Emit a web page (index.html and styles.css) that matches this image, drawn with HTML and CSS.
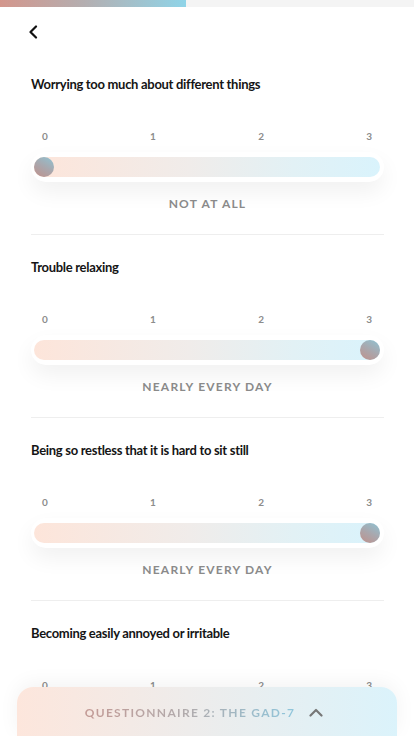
FILE: index.html
```html
<!DOCTYPE html>
<html lang="en">
<head>
<meta charset="utf-8">
<title>GAD-7</title>
<link rel="stylesheet" href="styles.css">
</head>
<body>
<div class="app">
  <div class="progress"><div class="progress-fill"></div></div>
  <header class="header">
    <button class="back" aria-label="Back">
      <svg width="10" height="14" viewBox="0 0 10 14"><path d="M8 1.5 L2.5 7 L8 12.5" fill="none" stroke="#111" stroke-width="2.2" stroke-linecap="round" stroke-linejoin="round"/></svg>
    </button>
  </header>
  <main class="questions">
    <section class="question">
      <h2 class="q-title">Worrying too much about different things</h2>
      <div class="scale"><span>0</span><span>1</span><span>2</span><span>3</span></div>
      <div class="track-wrap"><div class="track start"><div class="thumb"></div></div></div>
      <div class="answer">NOT AT ALL</div>
    </section>
    <section class="question">
      <h2 class="q-title">Trouble relaxing</h2>
      <div class="scale"><span>0</span><span>1</span><span>2</span><span>3</span></div>
      <div class="track-wrap"><div class="track end"><div class="thumb"></div></div></div>
      <div class="answer">NEARLY EVERY DAY</div>
    </section>
    <section class="question">
      <h2 class="q-title">Being so restless that it is hard to sit still</h2>
      <div class="scale"><span>0</span><span>1</span><span>2</span><span>3</span></div>
      <div class="track-wrap"><div class="track end"><div class="thumb"></div></div></div>
      <div class="answer">NEARLY EVERY DAY</div>
    </section>
    <section class="question">
      <h2 class="q-title">Becoming easily annoyed or irritable</h2>
      <div class="scale"><span>0</span><span>1</span><span>2</span><span>3</span></div>
    </section>
  </main>
  <footer class="bottom-bar">
    <span class="bar-title">QUESTIONNAIRE 2: THE GAD-7</span>
    <svg class="chev" width="14" height="9" viewBox="0 0 14 9"><path d="M1.5 7.5 L7 2 L12.5 7.5" fill="none" stroke="#777" stroke-width="2.2" stroke-linecap="round" stroke-linejoin="round"/></svg>
  </footer>
</div>
</body>
</html>
```

FILE: styles.css
```css
* { box-sizing: border-box; }
html, body { margin: 0; padding: 0; background: #fff; }
body { font-family: Lato, "Open Sans", sans-serif; color: #111; }

.app { height: 100vh; overflow: hidden; position: relative; }

.progress { height: 7px; background: #f4f4f4; }
.progress-fill { width: 186px; height: 100%; background: linear-gradient(90deg, #d3968c 0%, #b4aeb0 45%, #8fd4e8 100%); }

.header { height: 53px; padding: 16px 0 0 26px; }
.back { border: 0; background: none; padding: 0; width: 14px; height: 18px; display: flex; align-items: center; justify-content: center; }

.questions { padding: 0 30px 0 31px; }
.question { padding: 24px 0 22px; border-bottom: 1px solid #eeeeee; }
.question:first-child { padding-top: 16px; }
.question:last-child { border-bottom: 0; }

.q-title { margin: 0; font-size: 13px; font-weight: 700; line-height: 16px; color: #151515; letter-spacing: -0.3px; }

.scale { display: flex; justify-content: space-between; padding: 0 12px 0 11px; margin-top: 38px; font-size: 10px; line-height: 12px; color: #8c8c8c; font-weight: 700; }

.track-wrap { margin-top: 10px; height: 30px; padding: 5px 4px 5px 3px; background: #fff; border-radius: 15px; box-shadow: 0 10px 22px rgba(0,0,0,0.06); }
.track { height: 20px; border-radius: 10px; background: linear-gradient(90deg, #fde5da 0%, #f0ecea 45%, #e2f1f5 75%, #d9f3fc 100%); display: flex; }
.track.end { justify-content: flex-end; }
.thumb { width: 20px; height: 20px; border-radius: 50%; background: linear-gradient(210deg, #8fc3d3 0%, #a9a7ad 50%, #c0918b 100%); }

.answer { margin-top: 14px; text-align: center; font-size: 12px; line-height: 16px; font-weight: 700; letter-spacing: 1.2px; color: #8a8a8a; }

.bottom-bar { position: absolute; left: 17px; right: 17px; bottom: 0; height: 49px; border-radius: 16px 16px 0 0; background: linear-gradient(90deg, #fde6dc 0%, #eeeceb 45%, #dbf3fb 100%); box-shadow: 0 -4px 20px rgba(0,0,0,0.05); display: flex; align-items: center; justify-content: center; gap: 14px; padding-top: 2px; padding-right: 6px; }
.bar-title { font-size: 12px; line-height: 16px; font-weight: 700; letter-spacing: 1.3px; background: linear-gradient(90deg, #c39a95 0%, #b0acae 50%, #8fc6dc 100%); -webkit-background-clip: text; background-clip: text; color: transparent; }
.chev { display: block; }
```
